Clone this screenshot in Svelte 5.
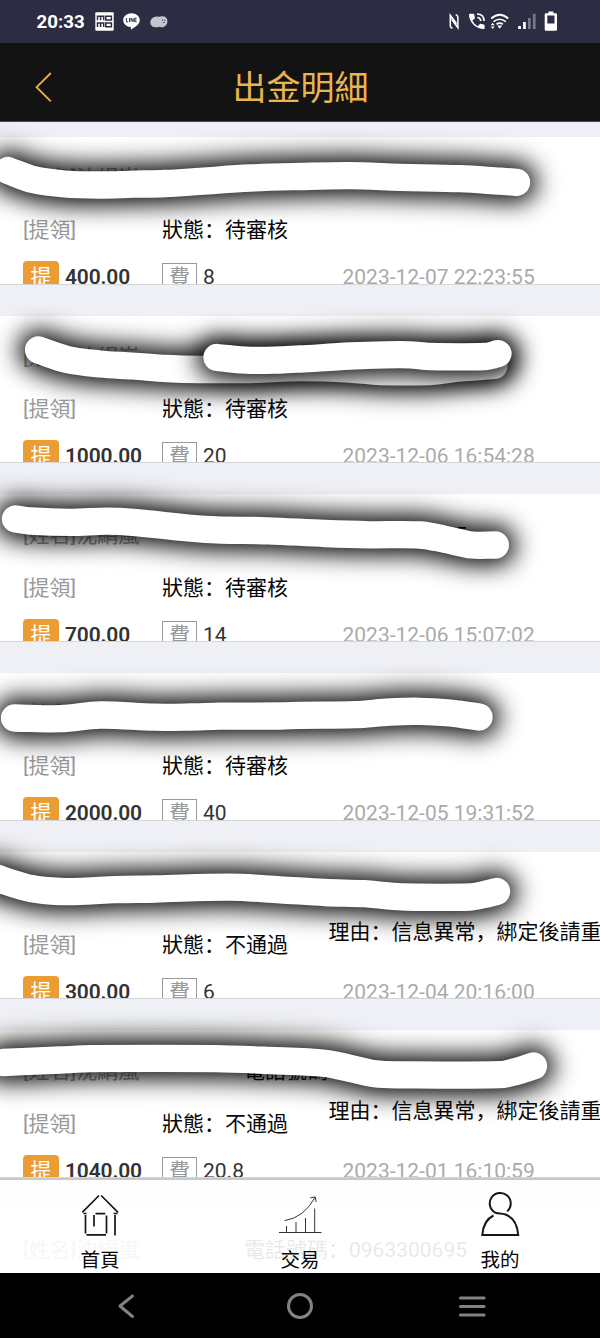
<script>
  const name = '[姓名]沈絹嵐';
  const phone = '0963300695';
  const records = [
    { name, state: '待審核', amount: '400.00', fee: '8', time: '2023-12-07 22:23:55' },
    { name, phone, state: '待審核', amount: '1000.00', fee: '20', time: '2023-12-06 16:54:28' },
    { name, phone, state: '待審核', amount: '700.00', fee: '14', time: '2023-12-06 15:07:02' },
    { name, state: '待審核', amount: '2000.00', fee: '40', time: '2023-12-05 19:31:52' },
    { state: '不通過', reason: '信息異常，綁定後請重', amount: '300.00', fee: '6', time: '2023-12-04 20:16:00' },
    { name, phone: ' ', state: '不通過', reason: '信息異常，綁定後請重', amount: '1040.00', fee: '20.8', time: '2023-12-01 16:10:59' },
    { name, phone }
  ];

  // Centre points of the marker strokes drawn over the list
  const marks = [
    [[8,170.5],[33,179.5],[65,184],[100,185],[133,184.2],[165,183.5],[200,181.3],[250,178],[300,176.5],[350,175.7],[400,177.3],[460,178.7],[500,181.2],[516.5,182.3]],
    [[38.5,350],[67,359.5],[100,364],[133,366],[167,368.5],[200,369.5],[250,369.5],[300,367.5],[350,369],[380,371.5],[430,371.5],[460,368],[494,365.5]],
    [[217,357.5],[250,360.3],[280,360],[300,359],[350,356],[385,354.8],[410,354.8],[430,356.5],[485,356.5],[498,353.7]],
    [[15.5,519],[31,521],[71,522.3],[107,521.2],[133,522.3],[205,529.3],[268,530.8],[325,533.5],[370,534.8],[420,535],[445,539.3],[472,545],[495.3,545]],
    [[14.5,718],[61,718.7],[100,715],[155,717.2],[190,717],[220,716.2],[280,716],[300,715.3],[355,714.7],[390,712],[420,711.3],[450,713],[465,715],[479,717]],
    [[-6,877],[5,881],[31,888.5],[60,891.5],[85,891.2],[115,889.7],[155,889],[230,887.2],[280,889.8],[325,892.5],[365,893.7],[385,895.7],[405,897],[470,897],[482,895],[496.5,891.5]],
    [[3,1062.5],[60,1060],[92,1058.7],[215,1058.7],[270,1060.5],[325,1063.3],[350,1068.3],[375,1073.8],[400,1074.8],[500,1074.7],[515,1071.7],[533.5,1066]]
  ];

  function curve(p) {
    let d = `M${p[0][0]} ${p[0][1]}`;
    for (let i = 0; i < p.length - 1; i++) {
      const a = p[Math.max(i - 1, 0)], b = p[i], c = p[i + 1], e = p[Math.min(i + 2, p.length - 1)];
      // Tangents follow the neighbours' slope, scaled to this segment's width
      const w = (c[0] - b[0]) / 3;
      const m1 = (c[1] - a[1]) / (c[0] - a[0]);
      const m2 = (e[1] - b[1]) / (e[0] - b[0]);
      d += `C${b[0] + w} ${b[1] + w * m1} ${c[0] - w} ${c[1] - w * m2} ${c[0]} ${c[1]}`;
    }
    return d;
  }
</script>

<div class="screen">
  <div class="status">
    <span class="clock">20:33</span>
    <svg class="momo" width="19" height="19" viewBox="0 0 19 19">
      <rect x=".3" y=".3" width="18.4" height="18.4" rx="1" fill="#fff" />
      <path d="M2.5 8.3V4.2h6.2v4.1M5.6 4.2v4.1M10.8 4.2h5.6v3.9h-5.6zM2.5 15V10.9h6.2V15M5.6 10.9V15M10.8 10.9h5.6v3.9h-5.6z" fill="none" stroke="#2c2d42" stroke-width="1.5" />
    </svg>
    <svg class="line" width="17" height="17" viewBox="0 0 17 17">
      <path d="M8.5.2C3.9.2.2 3.2.2 7c0 3.800 3 6.600 7 7 .9.2.8.6.6 2 0 .5.3.6.9.2 3.300-1.900 8.100-4.900 8.100-9.100C16.800 3.200 13.100.2 8.500.2z" fill="#fff" />
      <path d="M3.400 5v3.800h1.800M6.500 5v3.800M8 8.800V5l2.200 3.800V5M13.600 5.100h-1.900v3.600h1.900M11.700 6.900h1.700" fill="none" stroke="#2c2d42" stroke-width=".95" />
    </svg>
    <svg class="blob" width="18" height="12" viewBox="0 0 18 12">
      <path d="M5.500.8C7.200.2 8.300.8 9.200.8 11.500-.3 17.400-.2 17.400 5.200c0 5-4.900 7-8.300 5.600C5.700 12 .4 11.400.4 6.500.4 3.400 2.600 1.200 5.500.8z" fill="#c5c6cd" />
      <path d="M12.500 3.500v1.400M14.900 3.500v1.400M12.700 6.300q1 .6 2 0" fill="none" stroke="#2c2d42" stroke-width=".8" />
    </svg>
    <svg class="system" width="112" height="24" viewBox="446 10 112 24">
      <g fill="none" stroke="#fff" stroke-width="1.700">
        <path d="M452.500 28.300q-2.200-.3-2.200-3v-10l5.600 7.500v3M455.700 14.800q2.200.4 2.200 3v10l-5.600-7.500v-3" stroke-width="1.500" />
        <path d="M477 14q7 0 7 7M477.300 17.500q3.300.2 3.500 3.500" />
        <path d="M491.200 18.500q8.500-7.500 17 0M493.500 21.600q6.200-4.700 12.300 0M496.500 24.300q3.300-2.200 6.400 0" />
      </g>
      <path fill="#fff" d="M470 13.800h3.300q.9 0 1 .9l.6 3q.1.6-.4 1l-2.200 1.900q2 4 5.500 5.700l2-2.200q.4-.4 1-.3l3 .6q.8.200.8 1v2.800q0 .9-1 .9c-7.500 0-14.600-7-14.600-14.300q0-1 1-1z" />
      <path fill="#fff" d="M497.200 25.600h5l-2.500 3.200zM490.700 25.200l2-2.500 2 2.500zM490.700 26.400h4l-2 2.500zM518.200 26h2.700v3h-2.700zM523.100 22h2.700v7h-2.700zM546 13.200h2.400v-1.700h5v1.700h2.300q1.300 0 1.300 1.300v15q0 1.300-1.300 1.300h-9.700q-1.300 0-1.300-1.300v-15q0-1.300 1.300-1.300z" />
      <path fill="#77788a" d="M528 18h2.700v11H528zM532.900 13.800h2.700V29h-2.700z" />
      <path fill="#2c2d42" d="M547.300 15.500h7.200v8h-7.200z" />
    </svg>
  </div>

  <header>
    <svg width="20" height="32" viewBox="0 0 20 32"><path d="M16.800 2L2.600 16.200 16.800 30.300" fill="none" stroke="#e6b04b" stroke-width="1.900" /></svg>
    <h1>出金明細</h1>
  </header>

  <main>
    {#each records as r}
      <article>
        <div class="who">
          <span class="name">{r.name ?? ''}</span>
          {#if r.phone}<span>電話號碼：{r.phone}</span>{/if}
        </div>
        {#if r.state}
          <div class="kind">
            <span class="type">[提領]</span>
            <span class="state">狀態：{r.state}</span>
            {#if r.reason}<span class="reason">理由：{r.reason}</span>{/if}
          </div>
          <div class="sum">
            <div class="paid"><b class="badge">提</b><strong>{r.amount}</strong></div>
            <div class="cost"><span class="fee">費</span><span>{r.fee}</span></div>
            <time>{r.time}</time>
          </div>
        {/if}
      </article>
    {/each}

    <nav class="tabs">
      <div class="tab">
        <svg width="44" height="46" viewBox="78 1190 44 46">
          <path d="M82.300 1212.300L99 1195.500M101.200 1195.500L118 1212.300M83.500 1213.500h3M113.500 1213.500h4M85.500 1215v18.500M86.500 1234.900h19.500M106.500 1215.500v18M95.500 1213.600h9.800M94 1215v11.500M115 1215v20.500" fill="none" stroke="#161616" stroke-width="1.700" />
        </svg>
        <span>首頁</span>
      </div>
      <div class="tab">
        <svg width="44" height="46" viewBox="278 1190 44 46">
          <path d="M279 1232.500h42.500M286.500 1232v-6M296 1232v-10M305.500 1232v-14M314.700 1232v-23.500M284.500 1220.700Q304 1217.500 315 1197.500M310.300 1197.900l5-1 .8 5" fill="none" stroke="#333" stroke-width="1" />
        </svg>
        <span>交易</span>
      </div>
      <div class="tab">
        <svg width="44" height="46" viewBox="478 1190 44 46">
          <path d="M507.200 1211.300A10.500 10.500 0 1 0 495.500 1212.800C498.500 1213.900 502 1213 505.500 1214.500C513 1217.500 517.500 1225 518.200 1235H482.300C483 1226.500 486.500 1218.800 493.500 1215.500" fill="none" stroke="#161616" stroke-width="2" />
        </svg>
        <span>我的</span>
      </div>
    </nav>
  </main>

  <div class="keys">
    <svg width="28" height="26" viewBox="-2 0 28 26"><path d="M16.500 3L4 13l12.500 10.500" fill="none" stroke="#828282" stroke-width="3" stroke-linecap="round" stroke-linejoin="round" /></svg>
    <svg width="28" height="28" viewBox="0 0 28 28"><circle cx="14" cy="14" r="11.500" fill="none" stroke="#828282" stroke-width="3" /></svg>
    <svg width="28" height="26" viewBox="0 0 28 26"><path d="M2.500 5h23.500M2.500 13.500h23.500M2.500 22h23.500" stroke="#828282" stroke-width="3.200" stroke-linecap="round" /></svg>
  </div>

  <svg class="marker" width="600" height="1338" viewBox="0 0 600 1338">
    <defs>
      <filter id="soft" filterUnits="userSpaceOnUse" x="-80" y="90" width="760" height="1100">
        <feGaussianBlur stdDeviation="12" />
      </filter>
      <clipPath id="list"><path d="M0 122h600v1216H0z" /></clipPath>
    </defs>
    <g clip-path="url(#list)">
      {#each marks as m}
        <path d={curve(m)} class="shade" filter="url(#soft)" />
        <path d={curve(m)} class="ink" />
      {/each}
    </g>
  </svg>
</div>

<style>
  .screen {
    position: relative;
    display: flex;
    flex-direction: column;
    width: 600px;
    height: 1338px;
    overflow: hidden;
    font-family: Roboto, "Noto Sans CJK SC", sans-serif;
    font-size: 21px;
    color: #080808;
    white-space: nowrap;
  }
  svg { display: block; flex: none; }
  .status {
    display: flex;
    align-items: center;
    height: 43px;
    box-sizing: border-box;
    padding: 0 42px 0 36.500px;
    background: #2c2d42;
    flex: none;
  }
  .clock { color: #fff; font-weight: 700; font-size: 18.700px; width: 58.500px; }
  .line { margin-left: 9px; }
  .blob { margin-left: 10px; }
  .system { margin-left: auto; }
  header {
    display: grid;
    grid-template-columns: 1fr auto 1fr;
    align-items: center;
    height: 79px;
    padding: 0 34px;
    box-sizing: border-box;
    background: #131313;
    border-bottom: 1px solid #4a4a4c;
    flex: none;
  }
  header svg { margin-top: 10px; }
  h1 { grid-column: 2; margin: 11px 0 0 1px; font-size: 34px; line-height: 50px; font-weight: 400; color: #e9b551; }
  main {
    position: relative;
    flex: 1;
    min-height: 0;
    overflow: hidden;
    background: #eff0f5;
    padding-top: 15px;
    display: flex;
    flex-direction: column;
    gap: 31px;
  }
  article {
    flex: none;
    height: 147.700px;
    box-sizing: border-box;
    padding: 25px 0 0 23px;
    overflow: hidden;
    background: #fff;
    border-bottom: 1px solid #d6d6d8;
  }
  .who, .kind, .sum { display: flex; align-items: center; height: 32px; line-height: 32px; }
  .who > *, .kind > *, .sum > * { flex: none; }
  .name { width: 221px; color: #999; }
  .kind { margin-top: 20.200px; }
  .type { width: 139px; color: #999; }
  .state { width: 166.500px; }
  .reason { margin-top: -26px; }
  .sum { margin-top: 15.200px; color: #333; }
  .paid { display: flex; width: 139px; height: 32px; }
  .badge {
    width: 36px;
    height: 32px;
    margin-right: 6px;
    border-radius: 4px;
    background: #eb9d34;
    color: #fff;
    font-weight: 400;
    text-align: center;
  }
  strong { font-weight: 600; letter-spacing: -0.150px; }
  .cost { display: flex; width: 180.500px; }
  .fee {
    width: 33px;
    height: 28px;
    line-height: 27px;
    margin: 2px 6px 0 0;
    border: 1px solid #999;
    color: #999;
    text-align: center;
  }
  time { color: #aaa; }
  .tabs {
    position: absolute;
    inset: auto 0 0 0;
    height: 95px;
    box-sizing: border-box;
    border-top: 2px solid #c8c8c8;
    background: rgba(255, 255, 255, 0.91);
    display: grid;
    grid-template-columns: repeat(3, 1fr);
  }
  .tab { display: flex; flex-direction: column; align-items: center; padding-top: 10px; font-size: 19.500px; }
  .tab span { line-height: 28px; margin-top: 11px; }
  .keys {
    display: flex;
    flex: none;
    align-items: center;
    justify-content: space-between;
    height: 65px;
    box-sizing: border-box;
    padding: 0 114px;
    background: #000;
  }
  .marker { position: absolute; inset: 0; }
  .shade, .ink { fill: none; stroke-linecap: round; stroke-linejoin: round; }
  .shade { stroke: #000; stroke-width: 40; }
  .ink { stroke: #fff; stroke-width: 27.300; }
</style>
